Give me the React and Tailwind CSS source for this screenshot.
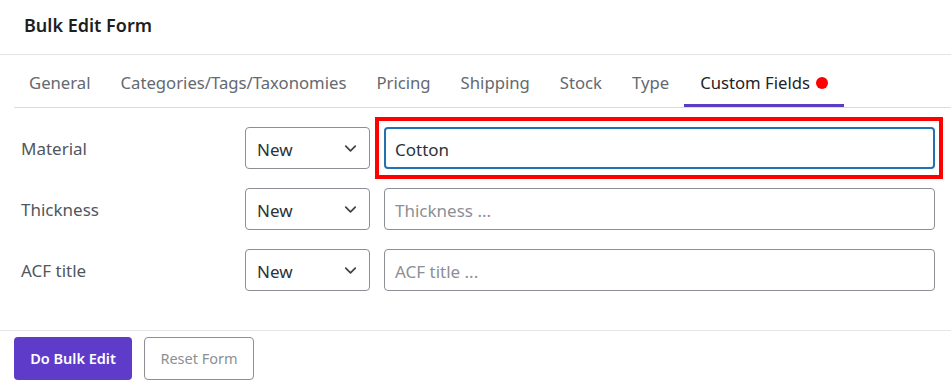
import { ChevronDown } from 'lucide-react'

const tabs = ['General', 'Categories/Tags/Taxonomies', 'Pricing', 'Shipping', 'Stock', 'Type']

const rows = [
  { label: 'Material', value: 'Cotton', placeholder: '', active: true },
  { label: 'Thickness', value: '', placeholder: 'Thickness ...' },
  { label: 'ACF title', value: '', placeholder: 'ACF title ...' },
]

function SelectBox() {
  return (
    <div className="w-[125px] h-[42px] shrink-0 flex items-center justify-between rounded-[4px] border border-[#8c8f94] pl-[11px] pr-[9px] text-[17px] text-[#2c3338]">
      <span className="pt-[3px]">New</span>
      <ChevronDown className="w-[19px] h-[19px] text-[#3c434a]" strokeWidth={2.2} />
    </div>
  )
}

function App() {
  return (
    <div
      className="w-[951px] h-[385px] bg-white overflow-hidden"
      style={{ fontFamily: '"Noto Sans", "Open Sans", sans-serif' }}
    >
      <div className="h-[55px] border-b border-[#e5e5e5] px-6 pb-[4px] flex items-center">
        <h1 className="text-[18px] font-semibold text-[#1e1e1e]">Bulk Edit Form</h1>
      </div>

      <div className="ml-[14px] h-[53px] border-b border-[#dcdcde] flex">
        {tabs.map((t) => (
          <div key={t} className="px-[15px] flex items-center border-b-[3px] border-transparent pt-[6px] text-[16.7px] text-[#646970]">
            {t}
          </div>
        ))}
        <div className="px-[16px] flex items-center gap-[6px] border-b-[3px] border-[#5b3cc4] pt-[6px] text-[16.7px] text-[#1d2327]">
          Custom Fields
          <span className="w-[12px] h-[12px] rounded-full bg-[#ff0000]" />
        </div>
      </div>

      <div className="h-[222px] pt-[19px] pl-[21px] pr-[16px] flex flex-col gap-[19px]">
        {rows.map((r) => (
          <div key={r.label} className="h-[42px] flex items-center">
            <div className="w-[224px] pt-[2px] text-[17px] text-[#50575e]">{r.label}</div>
            <SelectBox />
            <div className="relative ml-[14px] flex-1 h-[42px]">
              {r.active && (
                <div className="absolute -left-[9px] -top-[10px] -right-[8px] -bottom-[10px] border-4 border-[#ff0000]" />
              )}
              <input
                readOnly
                value={r.value}
                placeholder={r.placeholder}
                className={
                  r.active
                    ? 'relative w-full h-full rounded-[4px] border-2 border-[#2271b1] px-[9px] pt-[3px] text-[17px] text-[#2c3338] outline-none'
                    : 'relative w-full h-full rounded-[4px] border border-[#8c8f94] px-[10px] pt-[3px] text-[17px] text-[#2c3338] placeholder-[#8c8f94] outline-none'
                }
              />
            </div>
          </div>
        ))}
      </div>

      <div className="border-t border-[#e5e5e5] px-[14px] pt-[6px] flex gap-[12px]">
        <button className="w-[118px] h-[43px] rounded-[4px] bg-[#5e3cc9] text-white text-[14.5px] font-semibold">
          Do Bulk Edit
        </button>
        <button className="w-[110px] h-[43px] rounded-[4px] border border-[#8c8f94] bg-white text-[#8c8f94] text-[14.5px]">
          Reset Form
        </button>
      </div>
    </div>
  )
}

export default App
